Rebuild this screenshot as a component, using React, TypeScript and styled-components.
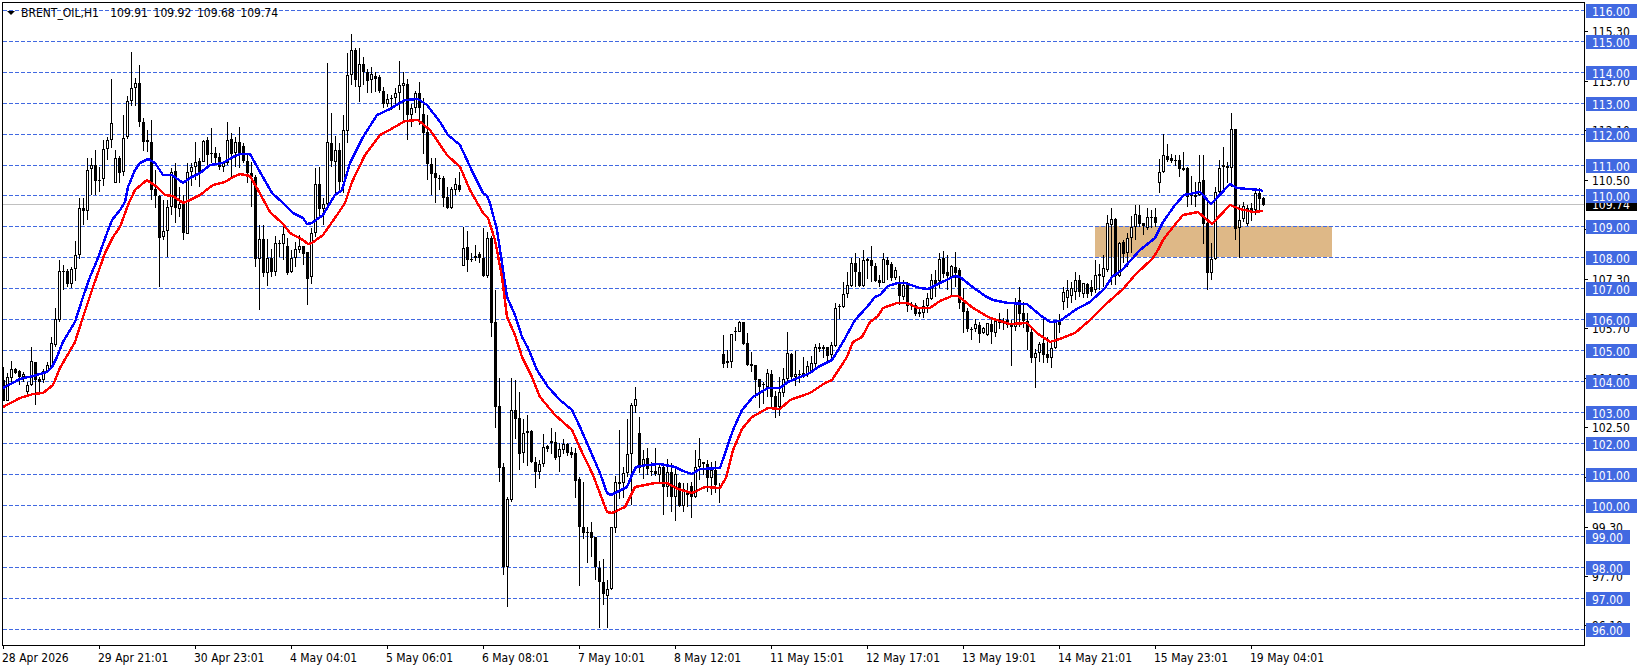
import styled, { createGlobalStyle } from "styled-components";

// rows read off the chart: high, body top, body bottom, low, 1 = up candle
type Row = [number, number, number, number, number];
type Candle = { x: number; high: number; top: number; bottom: number; low: number; up: boolean };

const seg = (originY: number, rows: Row[]) =>
  rows.map(([h, t, b, l, w]) => ({
    high: originY + h / 3,
    top: originY + t / 3,
    bottom: originY + b / 3,
    low: originY + l / 3,
    up: w === 1,
  }));

const rawCandles = [
  ...seg(20, [
    [1040, 1080, 1142, 1142, 0], [1058, 1072, 1142, 1142, 1], [1023, 1048, 1075, 1095, 1], [1045, 1048, 1060, 1062, 0],
    [1050, 1053, 1072, 1095, 0], [1055, 1062, 1072, 1085, 1], [1085, 1095, 1115, 1125, 1], [982, 1023, 1095, 1098, 1],
    [1025, 1027, 1080, 1155, 0], [1070, 1078, 1085, 1120, 0], [1048, 1052, 1080, 1088, 1], [1025, 1036, 1055, 1060, 1],
    [950, 970, 1040, 1042, 1], [865, 898, 975, 980, 1], [720, 752, 900, 905, 1], [735, 752, 754, 810, 0],
    [748, 753, 793, 800, 0], [740, 747, 792, 805, 1], [663, 706, 748, 782, 1], [535, 565, 705, 718, 1],
    [535, 565, 572, 615, 0], [415, 450, 572, 600, 1], [415, 436, 448, 525, 1], [390, 436, 482, 525, 0],
    [440, 480, 482, 515, 0], [360, 388, 478, 498, 1], [350, 360, 388, 420, 1], [178, 310, 360, 385, 1],
    [390, 415, 488, 488, 1], [408, 415, 460, 490, 0], [285, 354, 456, 468, 1], [228, 243, 352, 358, 1],
    [97, 205, 243, 258, 1], [175, 190, 205, 258, 1], [135, 190, 305, 320, 0], [295, 305, 365, 392, 0],
    [330, 360, 367, 395, 0], [300, 367, 510, 540, 0], [450, 507, 527, 565, 0], [525, 527, 653, 800, 0],
    [540, 633, 650, 660, 1], [540, 562, 632, 712, 1], [445, 455, 562, 585, 1], [430, 453, 563, 610, 0],
    [500, 553, 567, 590, 1], [525, 550, 640, 660, 0], [430, 455, 643, 643, 1],
  ]),
  ...seg(30, [
    [400, 412, 425, 468, 1], [335, 397, 412, 450, 1], [385, 393, 430, 470, 0], [330, 333, 395, 395, 1],
    [320, 330, 375, 410, 0], [295, 370, 373, 400, 0], [352, 370, 385, 402, 0], [370, 382, 410, 420, 0],
    [395, 400, 410, 425, 1], [277, 330, 398, 405, 1], [308, 328, 372, 445, 0], [320, 337, 370, 410, 1],
    [290, 337, 370, 415, 0], [340, 347, 392, 400, 0], [370, 393, 430, 460, 0], [395, 430, 440, 530, 0],
    [435, 442, 688, 710, 0], [585, 627, 688, 840, 1], [585, 628, 730, 740, 0], [628, 685, 728, 768, 1],
    [658, 685, 725, 740, 0], [618, 640, 725, 738, 1], [630, 638, 640, 680, 0], [585, 612, 642, 690, 1],
    [625, 648, 728, 735, 0], [660, 685, 725, 730, 1], [635, 657, 685, 710, 1], [615, 648, 660, 668, 1],
    [648, 648, 672, 705, 0], [665, 667, 747, 825, 0], [595, 608, 742, 762, 1], [415, 462, 608, 620, 1],
    [412, 463, 538, 568, 0], [505, 523, 537, 585, 1], [100, 337, 523, 530, 1], [250, 340, 392, 410, 0],
    [318, 360, 395, 490, 1], [340, 360, 455, 485, 0], [255, 300, 455, 490, 1], [70, 135, 302, 340, 1],
    [13, 60, 135, 165, 1], [55, 60, 150, 172, 0], [55, 102, 170, 215, 1], [82, 102, 125, 165, 0],
    [118, 125, 152, 190, 0], [110, 133, 150, 190, 1], [125, 138, 148, 187, 0], [135, 140, 182, 188, 0],
    [170, 183, 222, 235, 0], [192, 208, 222, 230, 1], [195, 204, 207, 240, 0], [175, 190, 205, 222, 1],
    [92, 165, 190, 240, 1], [125, 160, 167, 270, 1], [148, 163, 254, 330, 0], [222, 235, 254, 290, 1],
    [183, 190, 235, 250, 1], [155, 190, 235, 285, 0], [205, 252, 308, 372, 0], [255, 307, 402, 450, 0],
    [385, 402, 432, 495, 0], [385, 430, 443, 518, 0], [435, 443, 445, 480, 0], [438, 445, 503, 530, 0],
    [470, 500, 535, 537, 0], [470, 478, 533, 537, 1], [445, 463, 480, 495, 1], [425, 465, 480, 485, 0],
    [592, 653, 707, 707, 1], [602, 652, 690, 727, 0], [670, 686, 689, 695, 0], [645, 677, 685, 693, 1],
    [665, 672, 685, 700, 0], [595, 683, 738, 740, 0], [605, 625, 737, 745, 1],
  ]),
  ...seg(200, [
    [108, 115, 368, 412, 0], [270, 365, 620, 685, 0], [535, 617, 803, 845, 0], [788, 802, 1100, 1125, 0],
    [890, 898, 1100, 1222, 1], [535, 630, 900, 905, 1], [540, 630, 658, 718, 0], [575, 655, 762, 810, 0],
    [658, 700, 758, 788, 1], [645, 692, 700, 798, 1], [690, 693, 785, 790, 0], [770, 785, 815, 863, 0],
    [780, 793, 817, 838, 1], [702, 740, 792, 802, 1], [735, 737, 747, 755, 0], [685, 722, 730, 762, 1],
    [695, 725, 775, 780, 0], [730, 748, 772, 815, 1], [717, 732, 750, 762, 1], [730, 732, 760, 768, 0],
    [740, 755, 765, 775, 0], [745, 760, 842, 893, 0], [832, 838, 980, 1157, 0], [845, 980, 998, 1018, 0],
    [980, 997, 1000, 1088, 0], [967, 997, 1015, 1070, 0], [1010, 1012, 1102, 1140, 0], [1083, 1103, 1145, 1284, 0],
    [1078, 1147, 1183, 1215, 0], [1140, 1168, 1187, 1284, 1], [980, 982, 1168, 1170, 1], [828, 845, 983, 998, 1],
    [690, 845, 853, 897, 0], [800, 818, 848, 895, 1], [658, 763, 820, 830, 1], [608, 615, 763, 915, 1],
    [562, 598, 617, 640, 1], [650, 700, 805, 818, 0], [750, 778, 800, 838, 1], [745, 775, 808, 825, 0],
    [785, 812, 815, 828, 0], [745, 812, 822, 828, 0], [790, 802, 825, 850, 1], [795, 802, 862, 945, 0],
    [778, 815, 860, 890, 1], [790, 815, 892, 935, 0], [805, 822, 892, 962, 1], [845, 848, 918, 922, 0],
    [850, 868, 918, 935, 1], [850, 878, 885, 920, 0], [845, 858, 890, 955, 0], [750, 802, 892, 895, 1],
    [715, 778, 802, 840, 1], [785, 785, 792, 825, 0], [780, 793, 833, 875, 0], [785, 810, 833, 885, 1],
    [782, 810, 855, 880, 0], [850, 860, 865, 910, 1],
  ]),
  ...seg(240, [
    [285, 342, 372, 385, 0], [330, 363, 370, 385, 0], [282, 283, 365, 385, 1], [262, 272, 274, 303, 0],
    [243, 247, 275, 275, 1], [247, 247, 313, 315, 0], [280, 310, 375, 378, 0], [335, 372, 378, 395, 0],
    [375, 376, 420, 475, 0], [418, 418, 440, 503, 0], [425, 432, 435, 493, 0], [388, 400, 440, 470, 1],
    [390, 403, 470, 505, 0], [453, 468, 503, 535, 0], [410, 455, 500, 528, 1], [385, 418, 458, 470, 1],
    [277, 340, 418, 432, 1], [340, 342, 410, 418, 0], [332, 403, 412, 437, 1], [390, 402, 405, 428, 0],
    [350, 400, 405, 415, 0], [362, 378, 402, 410, 1], [348, 370, 392, 400, 1], [312, 322, 372, 380, 1],
    [310, 321, 326, 335, 0], [315, 320, 326, 355, 0], [320, 322, 348, 368, 0], [305, 315, 345, 362, 1],
    [190, 205, 318, 320, 1], [192, 197, 202, 238, 0], [125, 163, 200, 205, 1], [95, 136, 162, 175, 1],
    [55, 70, 137, 140, 1], [38, 70, 97, 140, 0], [55, 97, 137, 140, 0], [30, 60, 137, 140, 1],
    [55, 58, 63, 118, 1],
  ]),
  ...seg(230, [
    [48, 90, 107, 155, 0], [100, 107, 152, 155, 0], [135, 150, 158, 172, 0], [70, 88, 158, 158, 1],
    [82, 90, 104, 150, 0], [97, 102, 145, 152, 0], [110, 120, 145, 150, 1], [138, 155, 197, 225, 0],
    [150, 165, 200, 210, 1], [155, 165, 227, 245, 0], [215, 222, 224, 240, 0], [220, 225, 252, 258, 0],
    [230, 247, 251, 262, 0], [210, 228, 248, 265, 1], [190, 205, 228, 250, 1], [132, 150, 207, 210, 1],
    [120, 150, 165, 200, 0], [68, 87, 152, 175, 1], [62, 85, 132, 145, 0], [75, 125, 138, 180, 0],
    [105, 108, 140, 200, 1], [67, 110, 128, 170, 0], [115, 120, 218, 238, 0], [175, 215, 245, 310, 0],
    [235, 243, 298, 305, 0], [290, 297, 300, 330, 0], [268, 282, 298, 305, 1], [275, 285, 312, 338, 0],
    [290, 295, 310, 312, 1], [280, 280, 315, 317, 1], [262, 282, 305, 342, 0], [265, 272, 308, 320, 1],
    [250, 268, 278, 298, 1], [265, 275, 280, 300, 0], [238, 270, 285, 295, 0], [270, 280, 290, 408, 0],
    [205, 218, 290, 303, 1], [170, 210, 252, 290, 0], [215, 250, 272, 295, 0], [250, 272, 305, 360, 0],
    [295, 305, 383, 400, 0], [358, 370, 383, 473, 1], [335, 342, 368, 395, 1], [268, 340, 375, 398, 0],
    [320, 372, 383, 400, 0], [335, 355, 383, 415, 1], [270, 275, 353, 358, 1], [252, 270, 285, 310, 0],
  ]),
  ...seg(90, [
    [591, 606, 636, 660, 1], [570, 600, 624, 654, 1], [576, 594, 618, 639, 1], [546, 570, 606, 630, 1],
    [556, 570, 606, 620, 0], [578, 580, 612, 625, 1], [578, 583, 612, 625, 0], [570, 590, 606, 618, 0],
    [510, 555, 600, 610, 1], [522, 553, 557, 600, 0], [495, 535, 560, 590, 1], [375, 400, 540, 545, 1],
    [353, 388, 405, 585, 1], [385, 387, 558, 585, 0], [455, 458, 558, 560, 1], [450, 455, 492, 520, 0],
    [430, 445, 488, 530, 1], [378, 412, 445, 490, 1], [345, 373, 412, 450, 1], [345, 375, 402, 410, 0],
    [398, 400, 408, 435, 0], [355, 382, 413, 420, 1], [360, 382, 385, 415, 0], [355, 380, 398, 410, 0],
    [208, 245, 278, 308, 1], [133, 195, 245, 250, 1], [162, 198, 210, 215, 0], [193, 205, 212, 218, 0],
    [195, 210, 213, 228, 0], [195, 210, 237, 260, 0], [185, 233, 240, 243, 0], [230, 235, 320, 350, 0],
    [258, 316, 319, 345, 0], [275, 315, 320, 352, 0], [195, 275, 315, 318, 1], [195, 270, 402, 462, 0],
    [330, 400, 550, 600, 0], [458, 508, 548, 570, 1], [290, 305, 508, 510, 1], [210, 233, 305, 308, 1],
    [170, 225, 230, 300, 0], [215, 227, 233, 280, 0], [70, 118, 235, 290, 1], [118, 118, 418, 450, 0],
    [345, 390, 415, 505, 1], [335, 348, 387, 395, 1], [345, 355, 403, 408, 1], [340, 355, 368, 392, 0],
    [300, 310, 360, 375, 1], [295, 310, 328, 360, 0], [322, 325, 345, 348, 0],
  ]),
];

const candles: Candle[] = rawCandles.map((c, i) => ({ ...c, x: 3 + 4 * i }));

const blueLine =
  "3,388 20,379 33,376 47,372 52,367 57,357 63,342 75,322 83,297 90,277 98,258 107,233 112,220 120,210 125,202 128,187 135,170 140,163 148,159 155,163 163,175 172,175 183,183 190,178 200,173 210,165 223,163 233,157 240,154 250,154 260,172 272,193 283,203 293,213 303,218 307,224 312,223 323,215 335,195 342,190 350,163 363,137 377,115 390,109 405,100 418,99 427,105 440,122 448,135 460,145 473,173 483,193 487,196 490,203 497,230 502,263 507,297 515,315 522,337 528,348 537,370 548,387 560,400 572,410 580,427 590,450 600,473 607,493 611,495 627,487 632,475 636,467 647,465 660,464 675,467 683,471 692,474 700,469 720,468 733,430 742,410 753,397 768,388 780,388 788,382 810,373 818,367 832,360 843,342 855,320 867,307 875,297 880,295 888,286 898,283 905,283 920,288 928,289 942,282 955,276 960,277 970,285 985,296 993,300 1008,303 1027,304 1040,315 1050,322 1060,321 1075,310 1090,302 1105,288 1112,277 1122,270 1140,250 1155,238 1163,222 1175,205 1184,195 1200,192 1211,204 1230,184 1237,188 1260,190 1263,191";

const redLine =
  "3,407 20,398 33,394 43,393 53,385 60,368 75,342 83,317 93,287 105,253 113,237 120,227 128,205 135,190 147,180 157,187 165,195 173,196 183,203 190,200 200,195 213,185 225,182 233,177 240,174 250,176 258,190 270,212 283,224 290,233 303,240 308,244 312,243 323,235 337,215 345,203 352,182 365,155 380,135 393,128 405,121 418,120 430,130 447,155 460,167 470,190 483,213 488,218 495,240 502,277 507,317 515,335 522,357 532,377 540,397 555,415 572,430 580,448 593,475 607,512 612,513 625,507 635,487 655,483 667,483 678,489 692,493 705,487 720,488 726,478 733,450 742,429 752,417 768,408 780,409 790,400 810,393 825,383 832,380 847,357 853,342 862,337 870,322 878,316 883,308 897,303 907,303 918,308 930,308 940,301 952,296 958,296 973,308 990,318 1010,324 1027,323 1037,333 1050,342 1060,339 1075,333 1090,320 1105,305 1123,289 1135,275 1153,258 1158,250 1163,240 1173,227 1183,215 1198,212 1212,224 1230,205 1240,209 1253,212 1263,211";

const levels = [
  { price: "116.00", y: 10 }, { price: "115.00", y: 41 }, { price: "114.00", y: 72 },
  { price: "113.00", y: 103 }, { price: "112.00", y: 134 }, { price: "111.00", y: 165 },
  { price: "110.00", y: 195 }, { price: "109.00", y: 226 }, { price: "108.00", y: 257 },
  { price: "107.00", y: 288 }, { price: "106.00", y: 319 }, { price: "105.00", y: 350 },
  { price: "104.00", y: 381 }, { price: "103.00", y: 412 }, { price: "102.00", y: 443 },
  { price: "101.00", y: 474 }, { price: "100.00", y: 505 }, { price: "99.00", y: 536 },
  { price: "98.00", y: 567 }, { price: "97.00", y: 598 }, { price: "96.00", y: 629 },
];

const scale = [
  { price: "115.30", y: 31 }, { price: "113.70", y: 81 }, { price: "112.10", y: 130 },
  { price: "110.50", y: 180 }, { price: "108.90", y: 229 }, { price: "107.30", y: 279 },
  { price: "105.70", y: 328 }, { price: "104.10", y: 378 }, { price: "102.50", y: 427 },
  { price: "100.90", y: 477 }, { price: "99.30", y: 527 }, { price: "97.70", y: 576 },
  { price: "96.10", y: 625 },
];

const times = [
  "28 Apr 2026", "29 Apr 21:01", "30 Apr 23:01", "4 May 04:01", "5 May 06:01", "6 May 08:01", "7 May 10:01",
  "8 May 12:01", "11 May 15:01", "12 May 17:01", "13 May 19:01", "14 May 21:01", "15 May 23:01", "19 May 04:01",
];

const GlobalStyle = createGlobalStyle`
  html, body {
    margin: 0;
    padding: 0;
    background: #ffffff;
  }
`;

const Page = styled.div`
  width: 1641px;
  height: 669px;
  box-sizing: border-box;
  padding: 2px 0 0 2px;
  background: #ffffff;
  overflow: hidden;
  font-family: "DejaVu Sans Condensed", "Noto Sans", sans-serif;
  font-size: 12px;
  line-height: 14px;
  color: #000000;
`;

const ChartRow = styled.div`
  display: flex;
`;

const Plot = styled.div`
  position: relative;
  width: 1583px;
  height: 644px;
  box-sizing: border-box;
  border: 1px solid #000000;
`;

const Canvas = styled.svg`
  display: block;
`;

const Legend = styled.div`
  position: absolute;
  top: 3px;
  left: 4px;
  display: flex;
  align-items: center;
  gap: 6px;
  white-space: pre;
  word-spacing: 2.2px;
`;

const LegendArrow = styled.span`
  width: 0;
  height: 0;
  border-left: 4px solid transparent;
  border-right: 4px solid transparent;
  border-top: 4px solid #000000;
`;

const PriceAxis = styled.div`
  position: relative;
  flex: 1;
  height: 644px;
`;

const ScaleLabel = styled.div`
  position: absolute;
  left: 7px;
  white-space: nowrap;
`;

const ScaleTick = styled.div`
  position: absolute;
  left: 0;
  width: 3px;
  height: 1px;
  background: #000000;
`;

const PriceTag = styled.div<{ $bid?: boolean }>`
  position: absolute;
  left: 1px;
  height: 14px;
  padding: 0 7px 0 6px;
  line-height: 16px;
  color: #ffffff;
  white-space: nowrap;
  background: ${(p) => (p.$bid ? "#000000" : "#4169e1")};
`;

const TimeAxis = styled.div`
  display: flex;
`;

const TimeCell = styled.div`
  flex: 0 0 96px;
  white-space: nowrap;
`;

const TimeTick = styled.div`
  width: 1px;
  height: 3px;
  margin: 0 0 2px 1px;
  background: #000000;
`;

const CandleMark = ({ c }: { c: Candle }) => {
  const top = Math.round(c.top);
  const h = Math.max(1, Math.round(c.bottom) - top);
  return (
    <g>
      <rect x={c.x} y={Math.round(c.high)} width={1} height={Math.round(c.low) - Math.round(c.high)} fill="#000000" />
      {c.up && h > 2 ? (
        <rect x={c.x - 0.5} y={top + 0.5} width={2} height={h - 1} fill="#ffffff" stroke="#000000" strokeWidth={1} />
      ) : (
        <rect x={c.x - 1} y={top} width={3} height={h} fill="#000000" />
      )}
    </g>
  );
};

export default function App() {
  return (
    <Page>
      <GlobalStyle />
      <ChartRow>
        <Plot>
          <Canvas width={1581} height={642} viewBox="3 3 1581 642" shapeRendering="crispEdges">
            <rect x={1095} y={226} width={237} height={31} fill="#deb887" />
            {levels.map((l) => (
              <line key={l.price} x1={3} x2={1584} y1={l.y + 0.5} y2={l.y + 0.5} stroke="#4169e1" strokeDasharray="4 2" />
            ))}
            <line x1={3} x2={1584} y1={204.5} y2={204.5} stroke="#c0c0c0" />
            {candles.map((c) => (
              <CandleMark key={c.x} c={c} />
            ))}
            <polyline points={blueLine} fill="none" stroke="#0000ff" strokeWidth={2.4} />
            <polyline points={redLine} fill="none" stroke="#ff0000" strokeWidth={2.4} />
          </Canvas>
          <Legend>
            <LegendArrow />
            <span>{"BRENT_OIL,H1  109.91 109.92 109.68 109.74"}</span>
          </Legend>
        </Plot>
        <PriceAxis>
          {scale.map((s) => (
            <div key={s.price}>
              <ScaleTick style={{ top: s.y - 2 }} />
              <ScaleLabel style={{ top: s.y - 8 }}>{s.price}</ScaleLabel>
            </div>
          ))}
          <PriceTag $bid style={{ top: 195 }}>109.74</PriceTag>
          {levels.map((l) => (
            <PriceTag key={l.price} style={{ top: l.y - 8 }}>{l.price}</PriceTag>
          ))}
        </PriceAxis>
      </ChartRow>
      <TimeAxis>
        {times.map((t) => (
          <TimeCell key={t}>
            <TimeTick />
            {t}
          </TimeCell>
        ))}
      </TimeAxis>
    </Page>
  );
}
